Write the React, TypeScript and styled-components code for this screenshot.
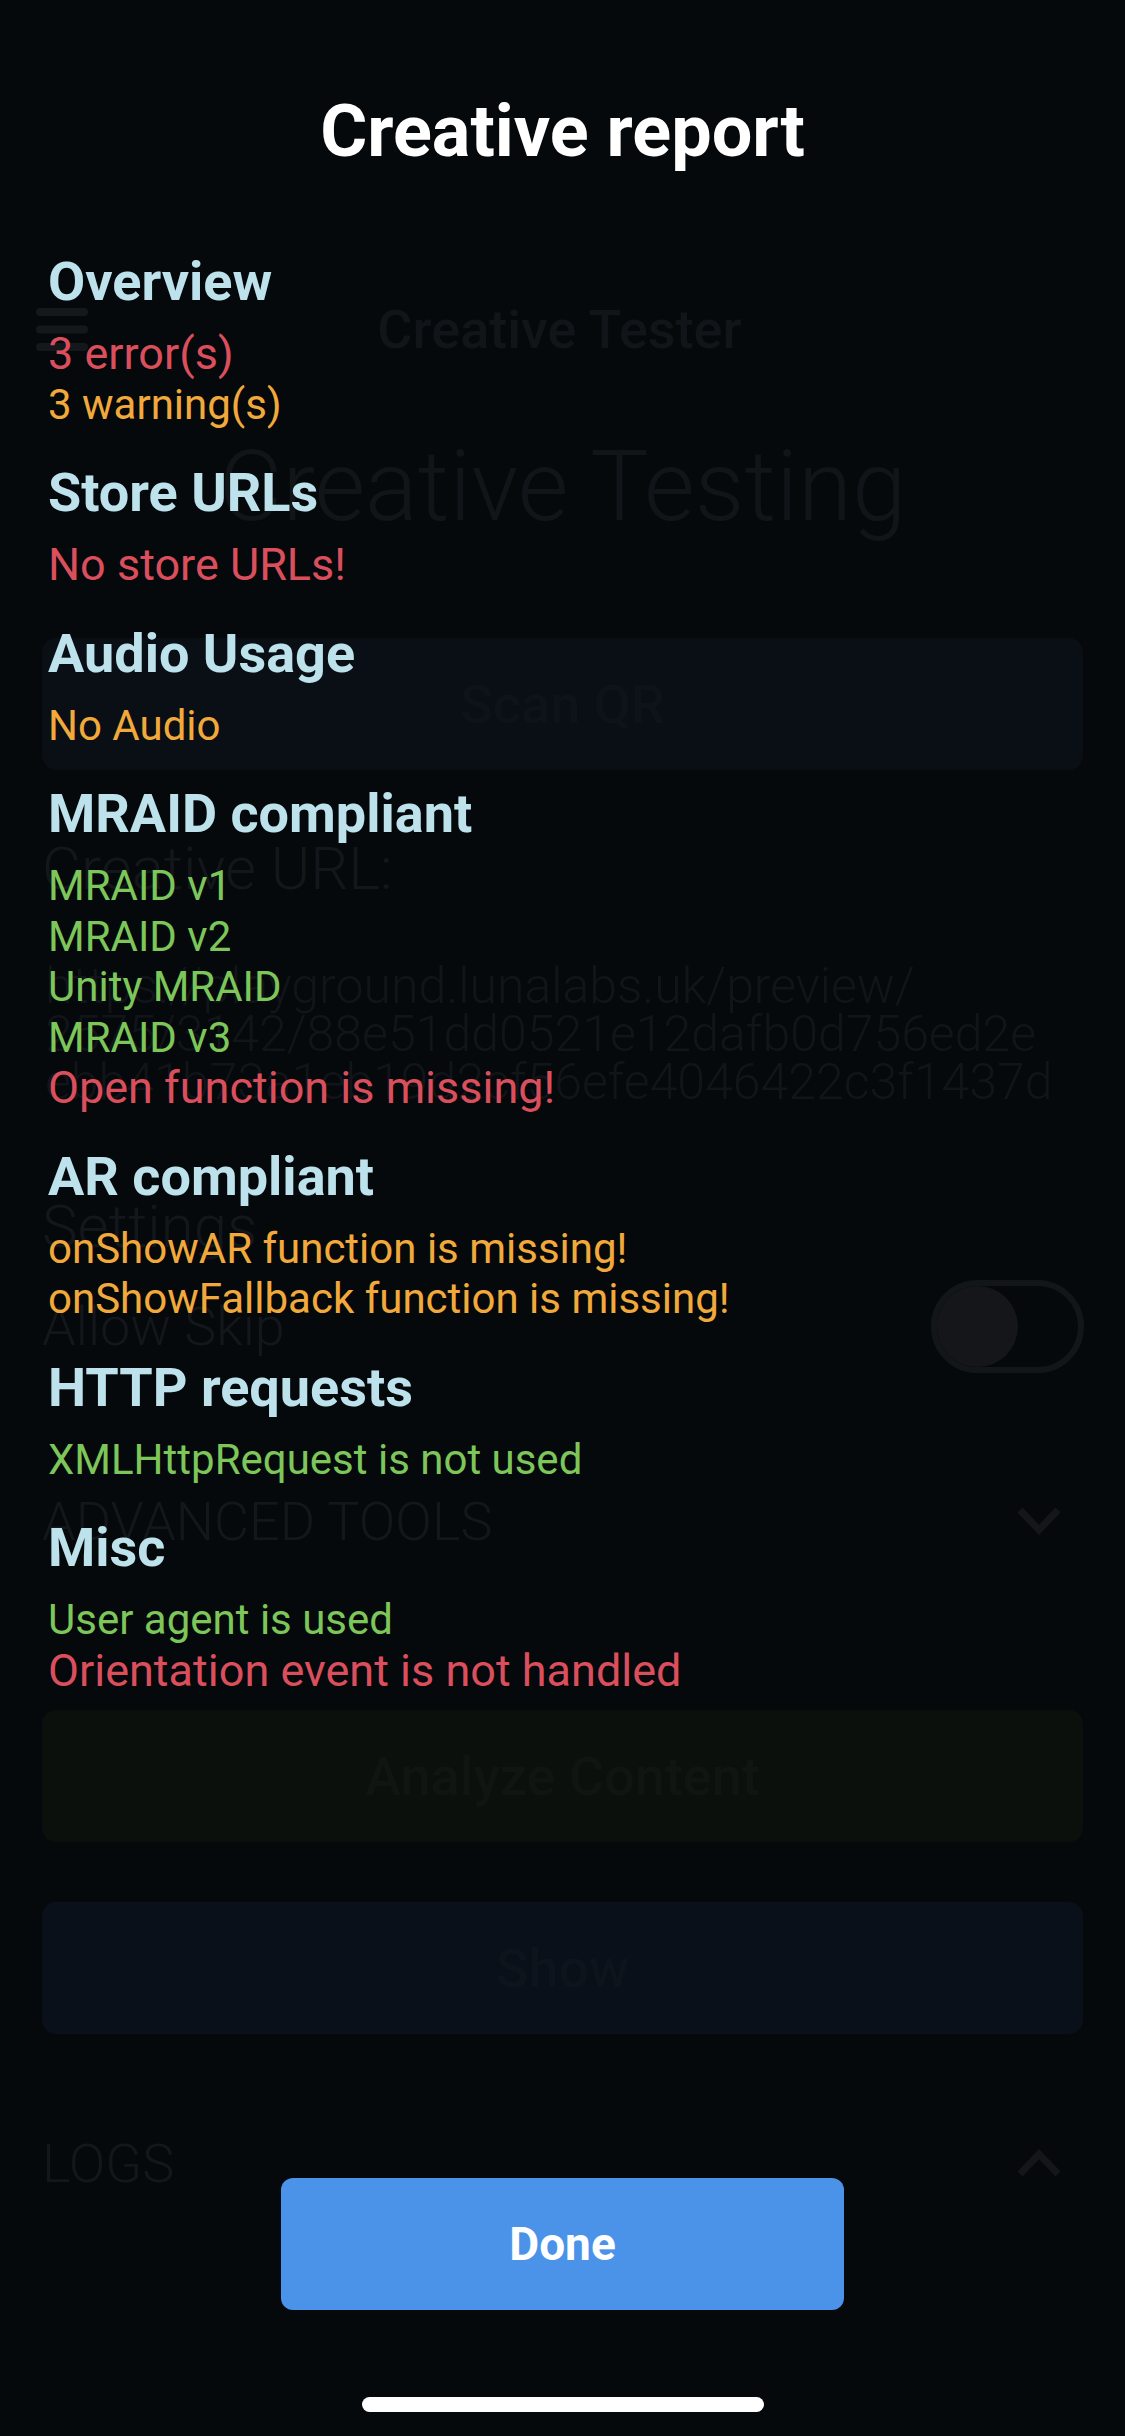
import React from 'react';
import styled, {createGlobalStyle} from 'styled-components';

const GlobalStyle = createGlobalStyle`
  * {
    box-sizing: border-box;
  }
  html, body {
    margin: 0;
    padding: 0;
    background: #05090c;
  }
  body {
    font-family: Roboto, "Noto Sans", "Liberation Sans", sans-serif;
  }
`;

const Screen = styled.div`
  position: relative;
  width: 1125px;
  height: 2436px;
  overflow: hidden;
  background: #05090c;
`;

/* the app page that lies dimmed behind the report */

const Page = styled.div`
  display: flex;
  flex-direction: column;
  padding: 290px 42px 0 42px;
  color: #13171b;
`;

const Header = styled.div`
  display: grid;
  grid-template-columns: 1fr auto 1fr;
  align-items: center;
  height: 80px;
  margin-left: -6px;
`;

const HeaderTitle = styled.div`
  font-size: 54px;
  font-weight: 500;
  line-height: 80px;
  color: #111519;
`;

const BigTitle = styled.div`
  margin-top: 59px;
  font-size: 98px;
  font-weight: 300;
  line-height: 116px;
  text-align: center;
  color: #111519;
`;

const PageButton = styled.div<{$bg: string; $fg: string; $top: number}>`
  display: flex;
  align-items: center;
  justify-content: center;
  height: 132px;
  margin-top: ${p => p.$top}px;
  border-radius: 14px;
  background: ${p => p.$bg};
  color: ${p => p.$fg};
  font-size: 54px;
  font-weight: 500;
`;

const Label = styled.div<{$top: number}>`
  margin-top: ${p => p.$top}px;
  font-size: 60px;
  font-weight: 300;
  line-height: 70px;
  color: #13171b;
`;

const UrlText = styled.div`
  margin-top: 58px;
  padding-left: 3px;
  font-size: 50px;
  font-weight: 300;
  line-height: 48px;
  color: #111519;
  white-space: nowrap;

  span {
    display: block;
  }
`;

const Row = styled.div<{$top: number; $height: number}>`
  display: flex;
  align-items: center;
  justify-content: space-between;
  height: ${p => p.$height}px;
  margin-top: ${p => p.$top}px;
`;

const RowLabel = styled.div`
  font-size: 54px;
  font-weight: 300;
  color: #13171b;
`;

const Toggle = styled.div`
  width: 153px;
  height: 93px;
  margin-right: -1px;
  border: 6px solid #131619;
  border-radius: 47px;
`;

const Thumb = styled.div`
  width: 81px;
  height: 81px;
  border-radius: 50%;
  background: #141619;
`;

const Chevron = styled.svg`
  margin-right: 22px;
`;

const HamburgerIcon = () => (
  <svg width="52" height="44" viewBox="0 0 52 44">
    <rect x="0" y="0" width="52" height="8" rx="4" fill="#14181c" />
    <rect x="0" y="17.5" width="52" height="8" rx="4" fill="#14181c" />
    <rect x="0" y="35" width="52" height="8" rx="4" fill="#14181c" />
  </svg>
);

const ChevronIcon = ({up}: {up?: boolean}) => (
  <Chevron width="44" height="28" viewBox="0 0 44 28">
    <polyline
      points={up ? '3,25 22,5 41,25' : '3,3 22,23 41,3'}
      fill="none"
      stroke="#141619"
      strokeWidth="7"
    />
  </Chevron>
);

/* the report sheet */

const Sheet = styled.div`
  position: absolute;
  inset: 0;
  display: flex;
  flex-direction: column;
  padding: 90px 48px 24px 48px;
`;

const SheetTitle = styled.h1`
  margin: 0 0 78px 0;
  font-size: 72px;
  font-weight: 700;
  line-height: 84px;
  text-align: center;
  color: #ffffff;
`;

const Section = styled.section`
  display: flex;
  flex-direction: column;
  margin-bottom: 33px;
`;

const SectionTitle = styled.h2`
  margin: 0 0 17px 0;
  font-size: 54px;
  font-weight: 700;
  line-height: 60px;
  color: #bde2ec;
`;

type Tone = 'error' | 'warning' | 'ok';

const toneColors: Record<Tone, string> = {
  error: '#db4f5d',
  warning: '#f2a93b',
  ok: '#7dc65a',
};

// errors are set one size up from warnings and passes
const Item = styled.div<{$tone: Tone}>`
  font-size: ${p => (p.$tone === 'error' ? 45 : 42)}px;
  font-weight: 400;
  line-height: 50.5px;
  color: ${p => toneColors[p.$tone]};
`;

const DoneButton = styled.button`
  align-self: center;
  width: 563px;
  height: 132px;
  margin-top: auto;
  border: none;
  border-radius: 12px;
  background: #4a93e9;
  color: #ffffff;
  font-family: inherit;
  font-size: 46px;
  font-weight: 700;
`;

const HomeIndicator = styled.div`
  align-self: center;
  width: 402px;
  height: 15px;
  margin-top: 87px;
  border-radius: 8px;
  background: #ffffff;
`;

const report: {title: string; items: [Tone, string][]}[] = [
  {title: 'Overview', items: [['error', '3 error(s)'], ['warning', '3 warning(s)']]},
  {title: 'Store URLs', items: [['error', 'No store URLs!']]},
  {title: 'Audio Usage', items: [['warning', 'No Audio']]},
  {
    title: 'MRAID compliant',
    items: [
      ['ok', 'MRAID v1'],
      ['ok', 'MRAID v2'],
      ['ok', 'Unity MRAID'],
      ['ok', 'MRAID v3'],
      ['error', 'Open function is missing!'],
    ],
  },
  {
    title: 'AR compliant',
    items: [
      ['warning', 'onShowAR function is missing!'],
      ['warning', 'onShowFallback function is missing!'],
    ],
  },
  {title: 'HTTP requests', items: [['ok', 'XMLHttpRequest is not used']]},
  {title: 'Misc', items: [['ok', 'User agent is used'], ['error', 'Orientation event is not handled']]},
];

const App = () => (
  <Screen>
    <GlobalStyle />
    <Page>
      <Header>
        <HamburgerIcon />
        <HeaderTitle>Creative Tester</HeaderTitle>
        <div />
      </Header>
      <BigTitle>Creative Testing</BigTitle>
      <PageButton $bg="#0a0f16" $fg="#0e1318" $top={93}>Scan QR</PageButton>
      <Label $top={64}>Creative URL:</Label>
      <UrlText>
        <span>https://playground.lunalabs.uk/preview/</span>
        <span>2575/3142/88e51dd0521e12dafb0d756ed2e</span>
        <span>ebb41b73a1eb19d2cf56efe4046422c3f1437d</span>
      </UrlText>
      <Label $top={86}>Settings</Label>
      <Row $top={18} $height={93}>
        <RowLabel>Allow Skip</RowLabel>
        <Toggle>
          <Thumb />
        </Toggle>
      </Row>
      <Row $top={108} $height={80}>
        <RowLabel>ADVANCED TOOLS</RowLabel>
        <ChevronIcon />
      </Row>
      <PageButton $bg="#0b100d" $fg="#10150f" $top={149}>Analyze Content</PageButton>
      <PageButton $bg="#09101a" $fg="#0e141b" $top={60}>Show</PageButton>
      <Row $top={89} $height={80}>
        <RowLabel>LOGS</RowLabel>
        <ChevronIcon up />
      </Row>
    </Page>

    <Sheet>
      <SheetTitle>Creative report</SheetTitle>
      {report.map(section => (
        <Section key={section.title}>
          <SectionTitle>{section.title}</SectionTitle>
          {section.items.map(([tone, text]) => (
            <Item key={text} $tone={tone}>{text}</Item>
          ))}
        </Section>
      ))}
      <DoneButton>Done</DoneButton>
      <HomeIndicator />
    </Sheet>
  </Screen>
);

export default App;
